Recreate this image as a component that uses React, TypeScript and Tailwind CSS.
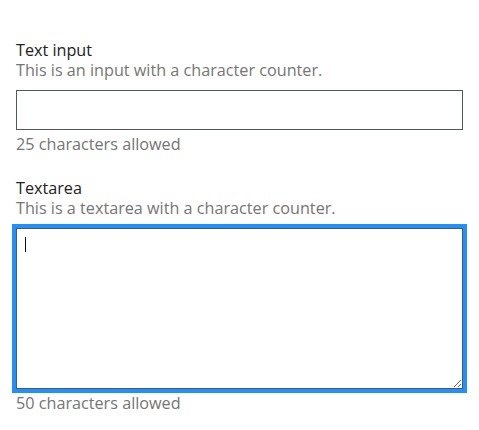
import React from "react";

export default function App() {
  return (
    <div className="min-h-[430px] bg-white px-4 pt-10 font-['Open_Sans',sans-serif] text-[16.2px] leading-5">
      <div>
        <label className="block text-[#222222]">Text input</label>
        <div className="text-[#757575]">This is an input with a character counter.</div>
        <input
          type="text"
          maxLength={25}
          className="mt-2.5 block h-10 w-full border border-[#515761] bg-white px-2 outline-none"
        />
        <div className="mt-1 text-[#757575]">25 characters allowed</div>
      </div>
      <div className="mt-6">
        <label className="block text-[#222222]">Textarea</label>
        <div className="text-[#757575]">This is a textarea with a character counter.</div>
        <div className="relative mt-2.5">
          <textarea
            maxLength={50}
            className="block h-[161px] w-full border border-[#515761] bg-white p-2 font-['Liberation_Mono',monospace] text-[13px] leading-normal text-[#222222] caret-transparent outline-4 outline-solid outline-[#1e90ff]"
          />
          <span className="pointer-events-none absolute left-[9px] top-[9px] h-[15px] w-px bg-[#111111]" />
        </div>
        <div className="mt-1 text-[#757575]">50 characters allowed</div>
      </div>
    </div>
  );
}
